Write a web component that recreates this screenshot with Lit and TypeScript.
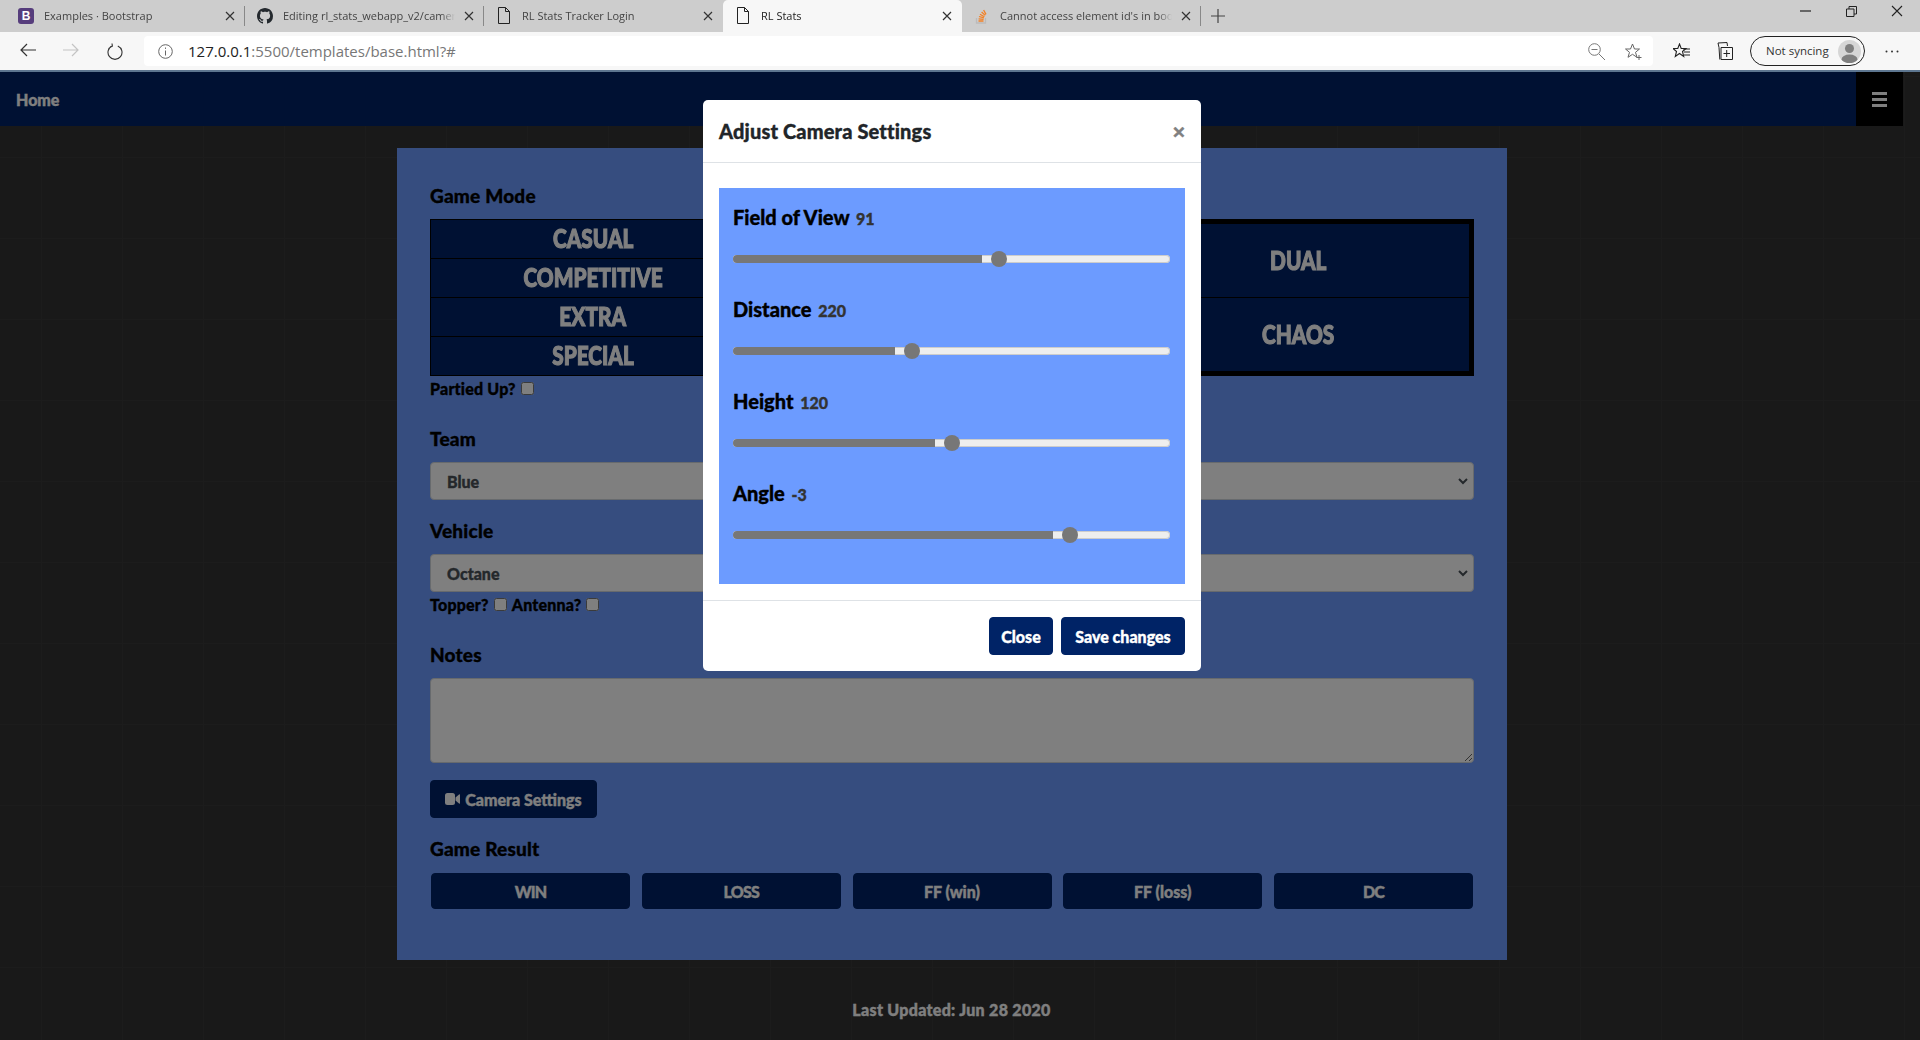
import { LitElement, html, css } from 'lit';
import { customElement } from 'lit/decorators.js';

const closeIcon = (color = '#333') => html`<svg class="tab-x" width="10" height="10" viewBox="0 0 10 10"><path d="M1 1l8 8M9 1l-8 8" stroke=${color} stroke-width="1.2" fill="none"/></svg>`;

const fileIcon = html`<svg width="14" height="17" viewBox="0 0 14 17"><path d="M1.5.5h7l4 4v12h-11zM8.5.5v4h4" fill="none" stroke="#222" stroke-width="1"/></svg>`;

const githubIcon = html`<svg width="16" height="16" viewBox="0 0 16 16"><path fill="#24292e" d="M8 0C3.58 0 0 3.58 0 8c0 3.54 2.29 6.53 5.47 7.59.4.07.55-.17.55-.38 0-.19-.01-.82-.01-1.49-2.01.37-2.53-.49-2.69-.94-.09-.23-.48-.94-.82-1.13-.28-.15-.68-.52-.01-.53.63-.01 1.08.58 1.23.82.72 1.21 1.87.87 2.33.66.07-.52.28-.87.51-1.07-1.78-.2-3.64-.89-3.64-3.95 0-.87.31-1.59.82-2.15-.08-.2-.36-1.02.08-2.12 0 0 .67-.21 2.2.82.64-.18 1.32-.27 2-.27.68 0 1.36.09 2 .27 1.53-1.04 2.2-.82 2.2-.82.44 1.1.16 1.92.08 2.12.51.56.82 1.27.82 2.15 0 3.07-1.87 3.75-3.65 3.95.29.25.54.73.54 1.48 0 1.07-.01 1.93-.01 2.2 0 .21.15.46.55.38A8.013 8.013 0 0016 8c0-4.42-3.58-8-8-8z"/></svg>`;

const soIcon = html`<svg width="14" height="16" viewBox="0 0 14 16"><path d="M1.5 10v5h9v-5" fill="none" stroke="#bcbbbb" stroke-width="1.3"/><path d="M3.5 13h5M3.6 10.800l5 .6M4 8.500l4.900 1.400M5 6.200l4.400 2.500M6.600 4l3.600 3.400M8.600 2l2.400 4.400" fill="none" stroke="#f48024" stroke-width="1.3"/></svg>`;

const bootstrapIcon = html`<span class="bs-logo">B</span>`;

interface Tab { title: string; icon: unknown; active?: boolean; }

const tabs: Tab[] = [
  { title: 'Examples · Bootstrap', icon: bootstrapIcon },
  { title: 'Editing rl_stats_webapp_v2/camera.html', icon: githubIcon },
  { title: 'RL Stats Tracker Login', icon: fileIcon },
  { title: 'RL Stats', icon: fileIcon, active: true },
  { title: "Cannot access element id's in bootstrap modal", icon: soIcon },
];

const sliders = [
  { label: 'Field of View', value: '91', thumb: 266 },
  { label: 'Distance', value: '220', thumb: 179 },
  { label: 'Height', value: '120', thumb: 219 },
  { label: 'Angle', value: '-3', thumb: 337 },
];

const leftModes = ['CASUAL', 'COMPETITIVE', 'EXTRA', 'SPECIAL'];
const results = ['WIN', 'LOSS', 'FF (win)', 'FF (loss)', 'DC'];

@customElement('browser-chrome')
class BrowserChrome extends LitElement {
  static styles = css`
    :host { display: block; font-family: 'Open Sans', 'Noto Sans', sans-serif; font-weight: 400; }
    .strip { height: 32px; background: #cdcdcd; display: flex; position: relative; padding-left: 6px; }
    .tab {
      width: 239px; height: 32px; display: flex; align-items: center; box-sizing: border-box;
      padding: 0 10px 1px 12px; font-size: 11px; color: #444; position: relative; flex: none;
    }
    .tab.sep::after { content: ''; position: absolute; right: 0; top: 6px; height: 20px; width: 1px; background: #888; }
    .tab.active { background: #f7f7f7; border-radius: 5px 5px 0 0; color: #222; }
    .tab .t { flex: 1; margin-left: 10px; white-space: nowrap; overflow: hidden; -webkit-mask-image: linear-gradient(to left, transparent 0, #000 14px); mask-image: linear-gradient(to left, transparent 0, #000 14px); }
    .tab .ic { width: 16px; display: flex; justify-content: center; flex: none; }
    .tab-x { flex: none; margin-left: 9px; }
    .bs-logo { width: 16px; height: 16px; border-radius: 3px; background: #563d7c; color: #fff; font: 700 12px/16px 'Liberation Sans', sans-serif; text-align: center; }
    .plus { margin: 9px 0 0 10px; }
    .win { margin-left: auto; display: flex; align-items: flex-start; }
    .win svg { display: block; }
    .win span { width: 46px; height: 22px; display: flex; justify-content: center; align-items: center; }
    .bar { height: 38px; background: #f7f7f7; display: flex; align-items: center; }
    .navs { width: 144px; display: flex; flex: none; padding-left: 20px; box-sizing: border-box; gap: 27px; }
    .address { width: 1509px; height: 30px; background: #fff; border-radius: 4px; display: flex; align-items: center; flex: none; box-sizing: border-box; padding: 0 11px 0 14px; }
    .address .url { margin-left: 15px; color: #222; font-size: 15px; }
    .address .url span { color: #777; }
    .address .end { margin-left: auto; display: flex; gap: 20px; align-items: center; }
    .tools { display: flex; align-items: center; flex: 1; padding-left: 20px; }
    .sync { margin-left: 17px; width: 115px; height: 30px; box-sizing: border-box; border: 1px solid #222; border-radius: 15px; display: flex; align-items: center; padding: 0 3px 1px 15px; font-size: 11.5px; color: #333; justify-content: space-between; }
    .avatar { width: 23px; height: 23px; border-radius: 50%; background: #d6d6d6; overflow: hidden; margin-top: 1px; }
    .dots { margin-left: 20px; }
    .line { height: 2px; background: #5d7690; }
  `;

  render() {
    return html`
      <div class="strip">
        ${tabs.map((t, i) => html`
          <div class="tab ${t.active ? 'active' : ''} ${i === 0 || i === 1 || i === 4 ? 'sep' : ''}">
            <span class="ic">${t.icon}</span>
            <span class="t">${t.title}</span>
            ${closeIcon()}
          </div>`)}
        <svg class="plus" width="14" height="14" viewBox="0 0 14 14"><path d="M7 0v14M0 7h14" stroke="#444" stroke-width="1.2"/></svg>
        <div class="win">
          <span><svg width="11" height="2"><path d="M0 1h11" stroke="#222" stroke-width="1.2"/></svg></span>
          <span><svg width="11" height="11" viewBox="0 0 11 11"><path d="M.5 3h7.500v7.500h-7.500zM3 3V.5h7.500V8H8" fill="none" stroke="#222"/></svg></span>
          <span><svg width="12" height="12" viewBox="0 0 12 12"><path d="M1 1l10 10M11 1L1 11" stroke="#222" stroke-width="1.1"/></svg></span>
        </div>
      </div>
      <div class="bar">
        <div class="navs">
          <svg width="16" height="14" viewBox="0 0 16 14"><path d="M16 7H1M7 1L1 7l6 6" fill="none" stroke="#333" stroke-width="1.2"/></svg>
          <svg width="16" height="14" viewBox="0 0 16 14"><path d="M0 7h15M9 1l6 6-6 6" fill="none" stroke="#c4c4c4" stroke-width="1.2"/></svg>
          <svg style="margin-left:1px" width="16" height="17" viewBox="0 0 16 17"><path d="M5.200 3A7 7 0 1 0 10.800 3M5 0.500l.4 2.600L3 4" fill="none" stroke="#333" stroke-width="1.100"/></svg>
        </div>
        <div class="address">
          <svg width="15" height="15" viewBox="0 0 15 15"><circle cx="7.500" cy="7.500" r="6.800" fill="none" stroke="#666"/><path d="M7.500 6.500v5M7.500 3.500v1.400" stroke="#666"/></svg>
          <div class="url">127.0.0.1<span>:5500/templates/base.html?#</span></div>
          <div class="end">
            <svg width="17" height="17" viewBox="0 0 17 17"><circle cx="6.500" cy="6.500" r="5.800" fill="none" stroke="#777"/><path d="M3.500 6.500h6M11 11l6 6" stroke="#777"/></svg>
            <svg width="17" height="17" viewBox="0 0 17 17"><path d="M7.500 1l2 5h5l-4 3.300 1.500 5-4.500-3-4.500 3 1.500-5L.5 6h5zM14 12v5M11.500 14.500h5" fill="none" stroke="#666"/></svg>
          </div>
        </div>
        <div class="tools">
          <svg width="17" height="17" viewBox="0 0 17 17"><path d="M6.500 1l1.700 4.500H13L9.500 8.500l1.200 5-4.200-3-4.200 3 1.200-5L0 5.500h4.800z" fill="none" stroke="#222" stroke-width="1.100"/><path d="M10 6h7M11 9h6M11 12h6" stroke="#222"/></svg>
          <svg style="margin-left:26px" width="17" height="18" viewBox="0 0 17 18"><path d="M3 5.500L2 1l9-.5.500 3.500M3 5.500l.8 12" fill="none" stroke="#222"/><path d="M5 5.500h11.500v12H5zM10.700 8v7M7.500 11.500h6.500" fill="none" stroke="#222"/></svg>
          <div class="sync">
            <span>Not syncing</span>
            <svg class="avatar" viewBox="0 0 23 23"><circle cx="11.500" cy="8.500" r="4.500" fill="#7f7f7f"/><ellipse cx="11.500" cy="19.500" rx="8" ry="5" fill="#7f7f7f"/></svg>
          </div>
          <svg class="dots" width="14" height="3" viewBox="0 0 14 3"><circle cx="1.500" cy="1.500" r="1" fill="#333"/><circle cx="7" cy="1.500" r="1" fill="#333"/><circle cx="12.500" cy="1.500" r="1" fill="#333"/></svg>
        </div>
      </div>
      <div class="line"></div>
    `;
  }
}

@customElement('app-root')
export class AppRoot extends LitElement {
  static styles = css`
    :host {
      display: block; width: 1920px; height: 1040px; overflow: hidden; background: #333;
      font-family: 'Lato', 'Open Sans', sans-serif; font-weight: 900; -webkit-text-stroke: .35px currentColor;
    }
    browser-chrome { -webkit-text-stroke: 0; }
    .page {
      position: relative; height: 968px; overflow: hidden; background-color: #333;
      background-image: linear-gradient(#383838 1px, transparent 1px), linear-gradient(90deg, #383838 1px, transparent 1px);
      background-size: 81px 81px;
      background-position: 0 4px, 41px 0;
    }
    .nav { width: 1903px; height: 54px; background: #002366; display: flex; justify-content: space-between; align-items: center; }
    .home { color: #fff; font-size: 16px; margin-left: 16px; }
    .burger { width: 47px; height: 54px; background: #000; display: flex; flex-direction: column; justify-content: center; align-items: center; gap: 3px; }
    .burger i { width: 15px; height: 3px; background: #fff; display: block; }
    .content { width: 1110px; margin: 22px 0 0 397px; box-sizing: border-box; background: #6c9bff; padding: 36px 33px 51px; }
    .label { font-size: 19px; line-height: 24px; color: #000; letter-spacing: .2px; }
    .modes { display: grid; grid-template-columns: 326px 1fr 352px; margin-top: 11px; height: 157px; background: #002366; }
    .col { display: flex; flex-direction: column; }
    .mode {
      flex: 1; color: #fff; display: flex; align-items: center; justify-content: center; box-sizing: border-box;
      font-size: 26px; -webkit-text-stroke: 1.1px currentColor; border: 1px solid #000; border-top: 0;
    }
    .mode span { display: inline-block; transform: scaleX(.8); margin-top: -2px; }
    .col.left { border-top: 1px solid #000; }
    .col.right { border: 5px solid #000; }
    .col.right .mode { border: 0; }
    .col.right .mode + .mode { border-top: 1px solid #000; }
    .check { height: 24px; display: flex; align-items: center; font-size: 16px; color: #000; letter-spacing: .2px; }
    .check input { margin: 0 5px 0 5px; width: 13px; height: 13px; }
    .mt27 { margin-top: 27px; }
    .mt19 { margin-top: 19px; }
    .select {
      margin-top: 11px; height: 38px; box-sizing: border-box; background: #fff; border: 1px solid #ced4da; border-radius: 4px;
      display: flex; align-items: center; justify-content: space-between; padding: 0 5px 0 16px; color: #495057; font-size: 16px;
    }
    textarea { display: block; margin-top: 11px; width: 100%; height: 85px; box-sizing: border-box; background: #fff; border: 1px solid #ced4da; border-radius: 4px; }
    .btn { border: 1px solid #002366; background: #002366; color: #fff; border-radius: 4px; font: inherit; font-size: 16px; box-sizing: border-box; }
    .camera { margin-top: 17px; width: 167px; height: 38px; display: flex; align-items: center; justify-content: center; gap: 5px; padding: 0; }
    .results { margin-top: 12px; display: grid; grid-template-columns: repeat(5, 199px); justify-content: space-between; padding: 0 1px; }
    .results .btn { height: 36px; font-size: 16px; padding: 0; }
    .results .btn.caps { letter-spacing: -.8px; }
    .updated { margin-top: 38px; width: 1903px; text-align: center; line-height: 24px; color: #fff; font-size: 16px; letter-spacing: .3px; }

    .backdrop { position: absolute; inset: 0; background: rgba(0, 0, 0, .5); }
    .modal { position: absolute; left: 703px; top: 28px; width: 498px; background: #fff; border-radius: 5px; }
    .m-head { height: 62px; border-bottom: 1px solid #dee2e6; display: flex; align-items: center; justify-content: space-between; padding: 0 16px; }
    .m-title { font-size: 20px; color: #212529; letter-spacing: .15px; }
    .x { color: #808080; font-size: 21px; font-family: 'Liberation Sans', sans-serif; font-weight: 700; margin-right: 0; line-height: 1; }
    .m-body { padding: 25px 16px 16px; }
    .panel { background: #6c9bff; padding: 17px 15px 41px 14px; display: flex; flex-direction: column; gap: 30px; }
    .s-label { font-size: 20px; height: 24px; line-height: 24px; color: #000; }
    .s-label span { font-size: 16px; color: #333; margin-left: 2px; }
    .slider { position: relative; height: 16px; margin-top: 22px; }
    .track { position: absolute; left: 0; right: 0; top: 4px; height: 8px; background: #eee; border-radius: 4px; overflow: hidden; box-shadow: inset 0 0 0 1px #ccc; }
    .fill { height: 8px; background: #777; }
    .thumb { position: absolute; top: 0; width: 16px; height: 16px; margin-left: -8px; border-radius: 50%; background: #777; }
    .m-foot { border-top: 1px solid #dee2e6; padding: 16px; display: flex; justify-content: flex-end; gap: 8px; }
    .m-foot .btn { height: 38px; }
    .close { width: 64px; }
    .save { width: 124px; }
  `;

  render() {
    const select = (v: string) => html`
      <div class="select">${v}
        <svg width="10" height="7" viewBox="0 0 10 7"><path d="M1 1l4 4 4-4" fill="none" stroke="#495057" stroke-width="2"/></svg>
      </div>`;
    return html`
      <browser-chrome></browser-chrome>
      <div class="page">
        <div class="nav">
          <div class="home">Home</div>
          <div class="burger"><i></i><i></i><i></i></div>
        </div>
        <div class="content">
          <div class="label">Game Mode</div>
          <div class="modes">
            <div class="col left">${leftModes.map((m) => html`<div class="mode"><span>${m}</span></div>`)}</div>
            <div class="col"></div>
            <div class="col right"><div class="mode"><span>DUAL</span></div><div class="mode"><span>CHAOS</span></div></div>
          </div>
          <div class="check">Partied Up?<input type="checkbox" /></div>
          <div class="label mt27">Team</div>
          ${select('Blue')}
          <div class="label mt19">Vehicle</div>
          ${select('Octane')}
          <div class="check">Topper?<input type="checkbox" />Antenna?<input type="checkbox" /></div>
          <div class="label mt27">Notes</div>
          <textarea></textarea>
          <button class="btn camera">
            <svg width="15" height="12" viewBox="0 0 15 12"><rect width="10" height="12" rx="2.500" fill="#fff"/><path d="M10.500 4.500L14 1.500c.5-.4 1-.2 1 .4v8.200c0 .6-.5.800-1 .4l-3.500-3z" fill="#fff"/></svg>
            Camera Settings
          </button>
          <div class="label mt19">Game Result</div>
          <div class="results">${results.map((r) => html`<button class="btn ${r === r.toUpperCase() ? 'caps' : ''}">${r}</button>`)}</div>
        </div>
        <div class="updated">Last Updated: Jun 28 2020</div>
        <div class="backdrop"></div>
        <div class="modal">
          <div class="m-head"><div class="m-title">Adjust Camera Settings</div><div class="x">×</div></div>
          <div class="m-body">
            <div class="panel">
              ${sliders.map((s) => html`
                <div>
                  <div class="s-label">${s.label} <span>${s.value}</span></div>
                  <div class="slider">
                    <div class="track"><div class="fill" style="width:${s.thumb - 17}px"></div></div>
                    <div class="thumb" style="left:${s.thumb}px"></div>
                  </div>
                </div>`)}
            </div>
          </div>
          <div class="m-foot">
            <button class="btn close">Close</button>
            <button class="btn save">Save changes</button>
          </div>
        </div>
      </div>
    `;
  }
}
